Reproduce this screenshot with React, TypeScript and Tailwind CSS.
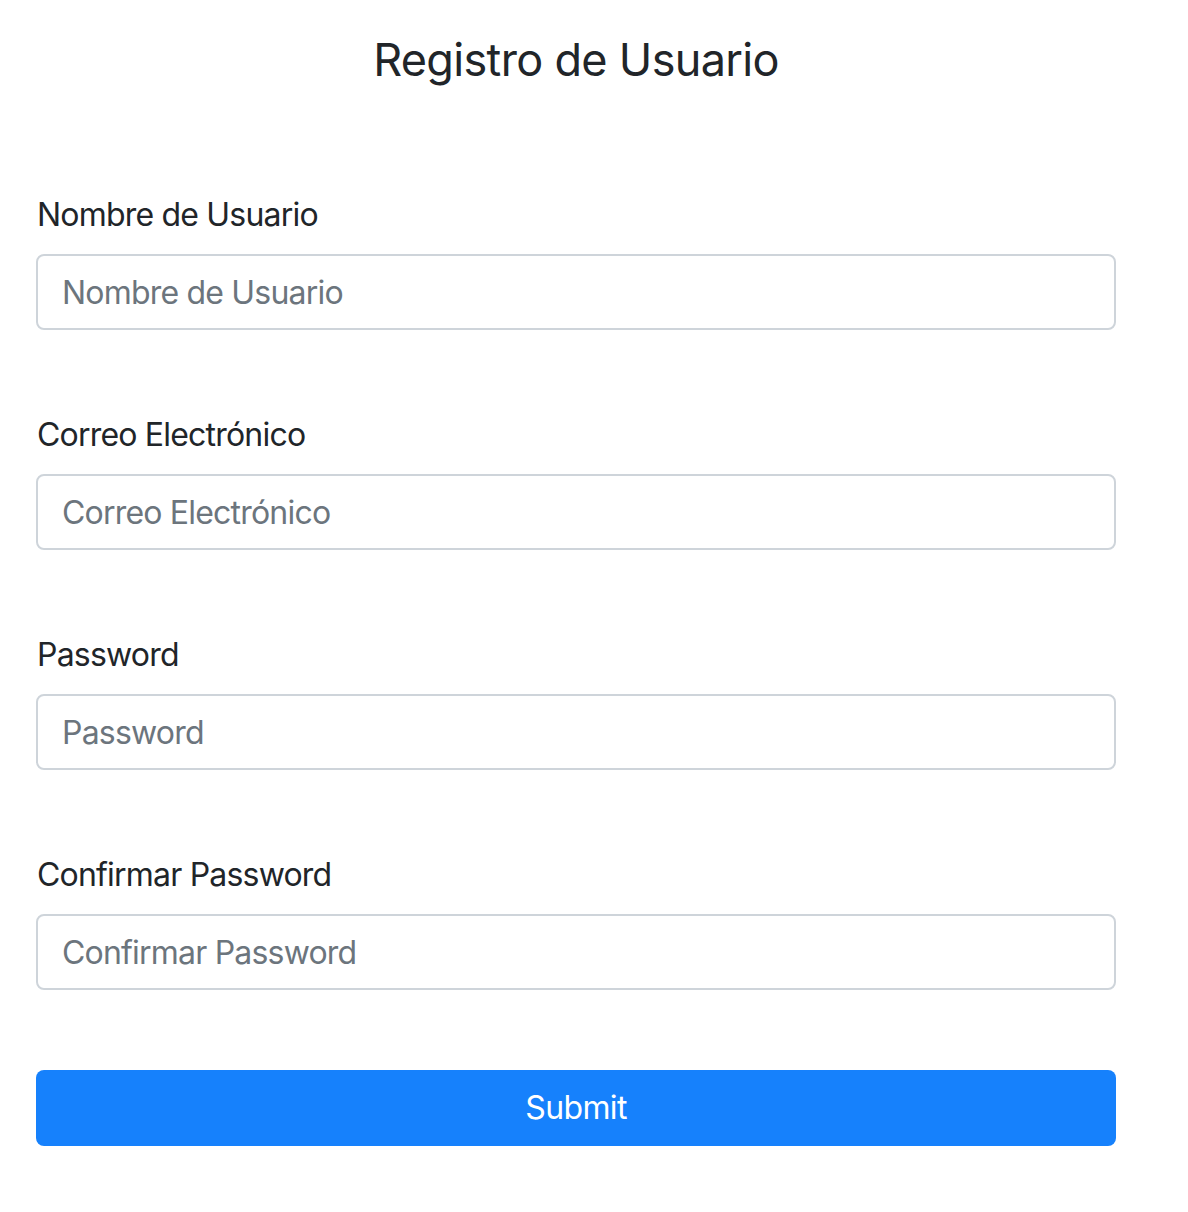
import React from 'react';

const fields = [
  { id: 'username', label: 'Nombre de Usuario', type: 'text' },
  { id: 'email', label: 'Correo Electrónico', type: 'email' },
  { id: 'password', label: 'Password', type: 'password' },
  { id: 'confirm', label: 'Confirmar Password', type: 'password' },
];

const App: React.FC = () => {
  return (
    <div className="min-h-[1212px] bg-white font-['Inter','Liberation_Sans',sans-serif] text-[#212529]">
      <div className="w-[1080px] ml-[36px]">
        <h4 className="pt-[31px] text-center text-[45px] leading-[58px] font-normal tracking-[-0.015em]">Registro de Usuario</h4>
        <form className="mt-[101px]" onSubmit={(e) => e.preventDefault()}>
          {fields.map((f) => (
            <div key={f.id} className="mb-[80px] flex flex-col">
              <label htmlFor={f.id} className="mb-[15px] pt-px text-[32px] leading-[48px] pl-px tracking-[-0.025em]">
                {f.label}
              </label>
              <input
                id={f.id}
                type={f.type === 'password' ? 'text' : f.type}
                placeholder={f.label}
                className="h-[76px] w-full rounded-[8px] border-2 border-[#ced4da] px-[24px] text-[32px] tracking-[-0.025em] text-[#495057] placeholder:text-[#6c757d] outline-none"
              />
            </div>
          ))}
          <button
            type="submit"
            className="h-[76px] w-full rounded-[8px] bg-[#1681fc] text-[32px] tracking-[-0.02em] text-white"
          >
            Submit
          </button>
        </form>
      </div>
    </div>
  );
};

export default App;
